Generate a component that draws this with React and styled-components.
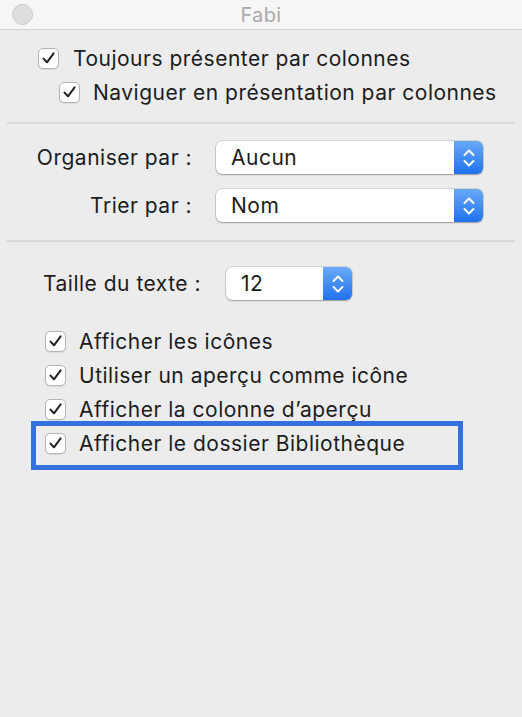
import React from "react";
import styled, { createGlobalStyle } from "styled-components";

const GlobalStyle = createGlobalStyle`
  html, body {
    margin: 0;
    padding: 0;
    background: #ececec;
  }
  body {
    font-family: Inter, "Noto Sans", "Liberation Sans", sans-serif;
    color: #1c1c1c;
  }
`;

const Window = styled.div`
  width: 522px;
  height: 717px;
  background: #ececec;
  overflow: hidden;
`;

const TitleBar = styled.div`
  height: 29px;
  display: grid;
  grid-template-columns: 1fr auto 1fr;
  align-items: center;
  background: #f6f6f6;
  border-bottom: 1px solid #d4d4d4;
`;

const CloseButton = styled.span`
  width: 21px;
  height: 21px;
  margin-left: 12px;
  border-radius: 50%;
  background: #dedede;
  border: 1px solid #cbcbcb;
  box-sizing: border-box;
`;

const Title = styled.div`
  font-size: 20px;
  color: #ababab;
  letter-spacing: 0.4px;
`;

const Section = styled.div`
  padding: ${(p) => p.$pad};
`;

const Separator = styled.div`
  height: 2px;
  margin: 0 7px;
  background: #d8d8d8;
`;

const CheckRow = styled.label`
  position: relative;
  display: flex;
  align-items: center;
  height: ${(p) => p.$h || 34}px;
  padding-left: ${(p) => p.$indent}px;
  gap: ${(p) => p.$gap || 13}px;
  font-size: 21px;
  letter-spacing: 0.5px;
  white-space: nowrap;

  ${(p) =>
    p.$highlight &&
    `
    &::after {
      content: "";
      position: absolute;
      left: 31px;
      width: 432px;
      top: -5px;
      height: 49px;
      border: 5px solid #3470de;
      box-sizing: border-box;
      pointer-events: none;
    }
  `}
`;

const Box = styled.span`
  width: 21px;
  height: 21px;
  flex: none;
  box-sizing: border-box;
  border: 1px solid #b4b4b4;
  border-radius: 5px;
  background: #fff;
  box-shadow: 0 1px 1px rgba(0, 0, 0, 0.08);
  display: flex;
  align-items: center;
  justify-content: center;
`;

const PopupGrid = styled.div`
  display: grid;
  grid-template-columns: ${(p) => p.$label}px ${(p) => p.$width}px;
  column-gap: ${(p) => p.$gap}px;
  row-gap: 15px;
  align-items: center;
`;

const Label = styled.div`
  font-size: 21px;
  letter-spacing: 0.5px;
  white-space: nowrap;
  text-align: ${(p) => p.$align || "right"};
  padding-left: ${(p) => p.$indent || 0}px;
`;

const Popup = styled.div`
  height: 33px;
  display: flex;
  align-items: stretch;
  background: #fff;
  border-radius: 6px;
  box-shadow: 0 0 0 0.5px rgba(0, 0, 0, 0.22), 0 1px 1.5px rgba(0, 0, 0, 0.25);
  overflow: hidden;
`;

const PopupValue = styled.div`
  flex: 1;
  display: flex;
  align-items: center;
  padding-left: 15px;
  font-size: 21px;
  letter-spacing: 0.5px;
`;

const Stepper = styled.div`
  width: 29px;
  flex: none;
  display: flex;
  align-items: center;
  justify-content: center;
  background: linear-gradient(#6aaaf9, #1f71ee);
`;

const Spacer = styled.div`
  height: ${(p) => p.$h}px;
`;

const Check = () => (
  <svg width="15" height="14" viewBox="0 0 15 14">
    <path
      d="M2.5 7.6 L6 11.3 L12.6 2.4"
      fill="none"
      stroke="#222"
      strokeWidth="2"
      strokeLinecap="round"
      strokeLinejoin="round"
    />
  </svg>
);

const Chevrons = () => (
  <svg width="14" height="22" viewBox="0 0 14 22">
    <path
      d="M2.5 8 L7 3.5 L11.5 8 M2.5 14 L7 18.5 L11.5 14"
      fill="none"
      stroke="#fff"
      strokeWidth="2"
      strokeLinecap="round"
      strokeLinejoin="round"
    />
  </svg>
);

const CheckItem = ({ children, ...rest }) => (
  <CheckRow {...rest}>
    <Box>
      <Check />
    </Box>
    <span>{children}</span>
  </CheckRow>
);

const Select = ({ value }) => (
  <Popup>
    <PopupValue>{value}</PopupValue>
    <Stepper>
      <Chevrons />
    </Stepper>
  </Popup>
);

export default function App() {
  return (
    <>
      <GlobalStyle />
      <Window>
        <TitleBar>
          <CloseButton />
          <Title>Fabi</Title>
          <span />
        </TitleBar>

        <Section $pad="11px 0 13px">
          <CheckItem $indent={38} $gap={14}>
            Toujours présenter par colonnes
          </CheckItem>
          <CheckItem $indent={59}>
            Naviguer en présentation par colonnes
          </CheckItem>
        </Section>

        <Separator />

        <Section $pad="17px 0 18px">
          <PopupGrid $label={192} $width={267} $gap={24}>
            <Label>Organiser par :</Label>
            <Select value="Aucun" />
            <Label>Trier par :</Label>
            <Select value="Nom" />
          </PopupGrid>
        </Section>

        <Separator />

        <Section $pad="25px 0 0">
          <PopupGrid $label={226} $width={126} $gap={0}>
            <Label $align="left" $indent={43}>
              Taille du texte :
            </Label>
            <Select value="12" />
          </PopupGrid>
          <Spacer $h={24} />
          <CheckItem $indent={45}>Afficher les icônes</CheckItem>
          <CheckItem $indent={45}>Utiliser un aperçu comme icône</CheckItem>
          <CheckItem $indent={45}>Afficher la colonne d’aperçu</CheckItem>
          <CheckItem $indent={45} $highlight>
            Afficher le dossier Bibliothèque
          </CheckItem>
        </Section>
      </Window>
    </>
  );
}
